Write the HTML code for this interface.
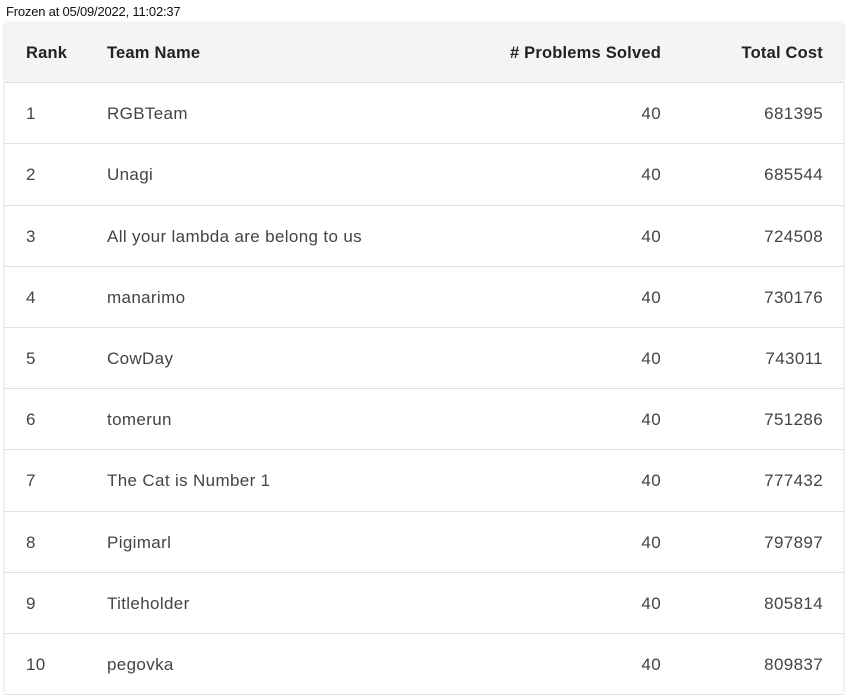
<!DOCTYPE html>
<html><head><style>
body{margin:0;background:#fff;font-family:"Liberation Sans",Arial,sans-serif;width:851px;height:693px;overflow:hidden;position:relative}
.fz{position:absolute;left:6px;top:4px;font-size:13px;color:#111;letter-spacing:-0.2px}
.tb{position:absolute;left:5px;top:22px;width:838px;box-shadow:0 1px 3px rgba(0,0,0,0.2);border-radius:3px;background:#fff}
table{border-collapse:collapse;width:100%}
th,td{height:58.2px;padding:0;font-size:17px;border-bottom:1px solid #e0e0e0;padding-top:2px}
th{background:#f4f4f4;color:#222;font-weight:bold;text-align:left;font-size:16.5px;letter-spacing:0.2px}
td{color:#444;letter-spacing:0.35px}
td.r1,th.r1{padding-left:21px;width:81px}
.r3{text-align:right;padding-right:2px}
.r4{text-align:right;padding-right:20px;width:160px}
</style></head><body>
<div class="fz">Frozen at 05/09/2022, 11:02:37</div>
<div class="tb"><table>
<tr><th class="r1">Rank</th><th>Team Name</th><th class="r3"># Problems Solved</th><th class="r4">Total Cost</th></tr>
<tr><td class="r1">1</td><td>RGBTeam</td><td class="r3">40</td><td class="r4">681395</td></tr>
<tr><td class="r1">2</td><td>Unagi</td><td class="r3">40</td><td class="r4">685544</td></tr>
<tr><td class="r1">3</td><td>All your lambda are belong to us</td><td class="r3">40</td><td class="r4">724508</td></tr>
<tr><td class="r1">4</td><td>manarimo</td><td class="r3">40</td><td class="r4">730176</td></tr>
<tr><td class="r1">5</td><td>CowDay</td><td class="r3">40</td><td class="r4">743011</td></tr>
<tr><td class="r1">6</td><td>tomerun</td><td class="r3">40</td><td class="r4">751286</td></tr>
<tr><td class="r1">7</td><td>The Cat is Number 1</td><td class="r3">40</td><td class="r4">777432</td></tr>
<tr><td class="r1">8</td><td>Pigimarl</td><td class="r3">40</td><td class="r4">797897</td></tr>
<tr><td class="r1">9</td><td>Titleholder</td><td class="r3">40</td><td class="r4">805814</td></tr>
<tr><td class="r1">10</td><td>pegovka</td><td class="r3">40</td><td class="r4">809837</td></tr>
</table></div>
</body></html>
